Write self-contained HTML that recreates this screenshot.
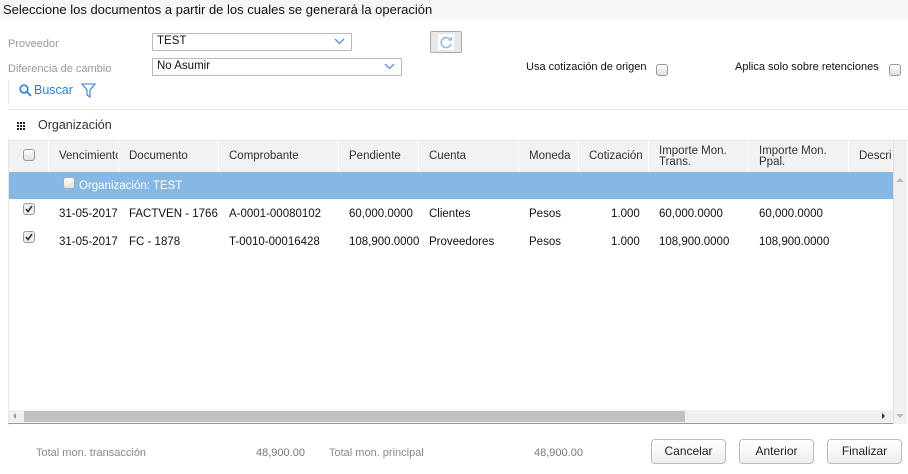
<!DOCTYPE html>
<html><head><meta charset="utf-8"><style>
*{box-sizing:border-box;margin:0;padding:0}
body{width:908px;height:474px;overflow:hidden;background:#fff;font-family:"Liberation Sans",sans-serif;font-size:12px;color:#222;position:relative}
.a{position:absolute;white-space:nowrap}
.sel{position:absolute;border:1px solid #bbb;height:18px;background:#fff;font-size:11.5px;padding:1px 4px;color:#111}
.chev{position:absolute;right:6px;top:4px}
.cb{position:absolute;width:12px;height:12px;border:1px solid #999;border-radius:3px;background:linear-gradient(#fff,#e0e0e0)}
.hd{position:absolute;top:141px;height:31px;background:#f2f2f2;border-right:1px solid #fff;font-size:11.5px;color:#333;padding:9px 0 0 10px;overflow:hidden;white-space:nowrap}
.hd2{padding-top:5px;line-height:11px}
.c{position:absolute;font-size:11.5px;color:#111;white-space:nowrap}
.btn{position:absolute;top:439px;height:25px;border:1px solid #bbb;border-radius:4px;background:linear-gradient(#fff,#eee);font-size:12px;text-align:center;line-height:23px;color:#222}
.ft{position:absolute;top:447px;font-size:11px;color:#888}
</style></head><body>
<div class="a" style="left:0;top:0;width:908px;height:19px;background:#f6f6f6;font-size:13px;padding:2px 0 0 3px;color:#111">Seleccione los documentos a partir de los cuales se generará la operación</div>
<div class="a" style="left:8px;top:38px;color:#999;font-size:11px">Proveedor</div>
<div class="a" style="left:8px;top:63px;color:#999;font-size:11px">Diferencia de cambio</div>
<div class="sel" style="left:152px;top:33px;width:200px">TEST<svg class="chev" width="11" height="7" viewBox="0 0 11 7"><path d="M1 1l4.5 4.5L10 1" fill="none" stroke="#5a8fd0" stroke-width="1.3"/></svg></div>
<div class="sel" style="left:152px;top:58px;width:250px">No Asumir<svg class="chev" width="11" height="7" viewBox="0 0 11 7"><path d="M1 1l4.5 4.5L10 1" fill="none" stroke="#5a8fd0" stroke-width="1.3"/></svg></div>
<div class="a" style="left:430px;top:31px;width:32px;height:22px;border:1px solid #aaa;background:#e8e8e8;border-radius:2px"><div style="position:absolute;left:7px;top:2px;width:16px;height:16px;background:#fff"></div><svg style="position:absolute;left:9px;top:4px" width="13" height="13" viewBox="0 0 13 13"><path d="M10.5 4A5 5 0 1 0 11 8" fill="none" stroke="#8ab4e8" stroke-width="1.5"/><path d="M8.5 4h3V1" fill="none" stroke="#8ab4e8" stroke-width="1.3"/></svg></div>
<div class="a" style="left:526px;top:61px;font-size:11px;color:#111">Usa cotización de origen</div>
<div class="cb" style="left:656px;top:64px"></div>
<div class="a" style="left:735px;top:61px;font-size:11px;color:#111">Aplica solo sobre retenciones</div>
<div class="cb" style="left:889px;top:64px"></div>
<div class="a" style="left:8px;top:80px;width:1px;height:23px;background:#e5e5e5"></div>
<svg class="a" style="left:19px;top:84px" width="13" height="13" viewBox="0 0 13 13"><circle cx="5" cy="5" r="3.8" fill="none" stroke="#2a7fd4" stroke-width="1.6"/><path d="M8 8l4 4" stroke="#2a7fd4" stroke-width="1.8"/></svg>
<div class="a" style="left:34px;top:83px;color:#2a7fd4;font-size:12.5px">Buscar</div>
<svg class="a" style="left:81px;top:83px" width="15" height="16" viewBox="0 0 15 16"><path d="M1 1h13L9 7v7l-3-2V7z" fill="none" stroke="#2a7fd4" stroke-width="1.1"/></svg>
<div class="a" style="left:8px;top:109px;width:900px;height:1px;background:#e5e5e5"></div>
<svg class="a" style="left:17px;top:122px" width="9" height="9" viewBox="0 0 9 9" fill="#222"><rect x="0" y="0" width="2" height="2"/><rect x="3" y="0" width="2" height="2"/><rect x="6" y="0" width="2" height="2"/><rect x="0" y="3" width="2" height="2"/><rect x="3" y="3" width="2" height="2"/><rect x="6" y="3" width="2" height="2"/><rect x="0" y="6" width="2" height="2"/><rect x="3" y="6" width="2" height="2"/><rect x="6" y="6" width="2" height="2"/></svg>
<div class="a" style="left:38px;top:118px;font-size:12.5px;color:#333">Organización</div>
<div class="a" style="left:8px;top:140px;width:900px;height:1px;background:#e5e5e5"></div>
<div class="a" style="left:8px;top:140px;width:1px;height:285px;background:#e5e5e5"></div>
<div class="hd" style="left:9px;width:40px"></div>
<div class="cb" style="left:23px;top:149px"></div>
<div class="hd" style="left:49px;width:70px">Vencimiento</div>
<div class="hd" style="left:119px;width:100px">Documento</div>
<div class="hd" style="left:219px;width:120px">Comprobante</div>
<div class="hd" style="left:339px;width:80px">Pendiente</div>
<div class="hd" style="left:419px;width:100px">Cuenta</div>
<div class="hd" style="left:519px;width:60px">Moneda</div>
<div class="hd" style="left:579px;width:70px">Cotización</div>
<div class="hd hd2" style="left:649px;width:100px">Importe Mon.<br>Trans.</div>
<div class="hd hd2" style="left:749px;width:100px">Importe Mon.<br>Ppal.</div>
<div class="hd" style="left:849px;width:44px">Descripción</div>
<div class="a" style="left:9px;top:172px;width:884px;height:27px;background:#85b8e4"></div>
<div class="cb" style="left:63px;top:177px;border-color:#aaa"></div>
<div class="a" style="left:79px;top:180px;color:#fff;font-size:11.5px">Organización: TEST</div>
<div class="a" style="left:893px;top:141px;width:14px;height:283px;background:#f0f0f0;border-left:1px solid #ddd"></div>
<div class="a" style="left:896px;top:178px;width:0;height:0;border:4px solid transparent;border-bottom:4px solid #bbb;border-top:0"></div>
<div class="a" style="left:896px;top:414px;width:0;height:0;border:4px solid transparent;border-top:4px solid #bbb;border-bottom:0"></div>
<div class="cb" style="left:23px;top:203px;background:#eee"></div><svg class="a" style="left:24px;top:204px" width="10" height="10" viewBox="0 0 10 10"><path d="M2 5l2 2.5L8 2" fill="none" stroke="#333" stroke-width="1.6"/></svg>
<div class="cb" style="left:23px;top:231px;background:#eee"></div><svg class="a" style="left:24px;top:232px" width="10" height="10" viewBox="0 0 10 10"><path d="M2 5l2 2.5L8 2" fill="none" stroke="#333" stroke-width="1.6"/></svg>
<div class="c" style="left:59px;top:208px">31-05-2017</div><div class="c" style="left:129px;top:208px">FACTVEN - 1766</div><div class="c" style="left:229px;top:208px">A-0001-00080102</div><div class="c" style="left:349px;top:208px">60,000.0000</div><div class="c" style="left:429px;top:208px">Clientes</div><div class="c" style="left:529px;top:208px">Pesos</div><div class="c" style="left:611px;top:208px">1.000</div><div class="c" style="left:659px;top:208px">60,000.0000</div><div class="c" style="left:759px;top:208px">60,000.0000</div>
<div class="c" style="left:59px;top:236px">31-05-2017</div><div class="c" style="left:129px;top:236px">FC - 1878</div><div class="c" style="left:229px;top:236px">T-0010-00016428</div><div class="c" style="left:349px;top:236px">108,900.0000</div><div class="c" style="left:429px;top:236px">Proveedores</div><div class="c" style="left:529px;top:236px">Pesos</div><div class="c" style="left:611px;top:236px">1.000</div><div class="c" style="left:659px;top:236px">108,900.0000</div><div class="c" style="left:759px;top:236px">108,900.0000</div>
<div class="a" style="left:9px;top:410px;width:884px;height:13px;background:#f0f0f0"></div>
<div class="a" style="left:13px;top:413px;width:0;height:0;border:3px solid transparent;border-right:3px solid #999;border-left:0"></div>
<div class="a" style="left:24px;top:411px;width:661px;height:11px;background:#c1c1c1"></div>
<div class="a" style="left:882px;top:413px;width:0;height:0;border:3px solid transparent;border-left:3px solid #333;border-right:0"></div>
<div class="a" style="left:8px;top:423px;width:885px;height:1px;background:#999"></div>
<div class="ft" style="left:36px">Total mon. transacción</div>
<div class="ft" style="left:256px;color:#777">48,900.00</div>
<div class="ft" style="left:329px">Total mon. principal</div>
<div class="ft" style="left:534px;color:#777">48,900.00</div>
<div class="btn" style="left:651px;width:75px">Cancelar</div>
<div class="btn" style="left:739px;width:75px">Anterior</div>
<div class="btn" style="left:827px;width:75px">Finalizar</div>
</body></html>
